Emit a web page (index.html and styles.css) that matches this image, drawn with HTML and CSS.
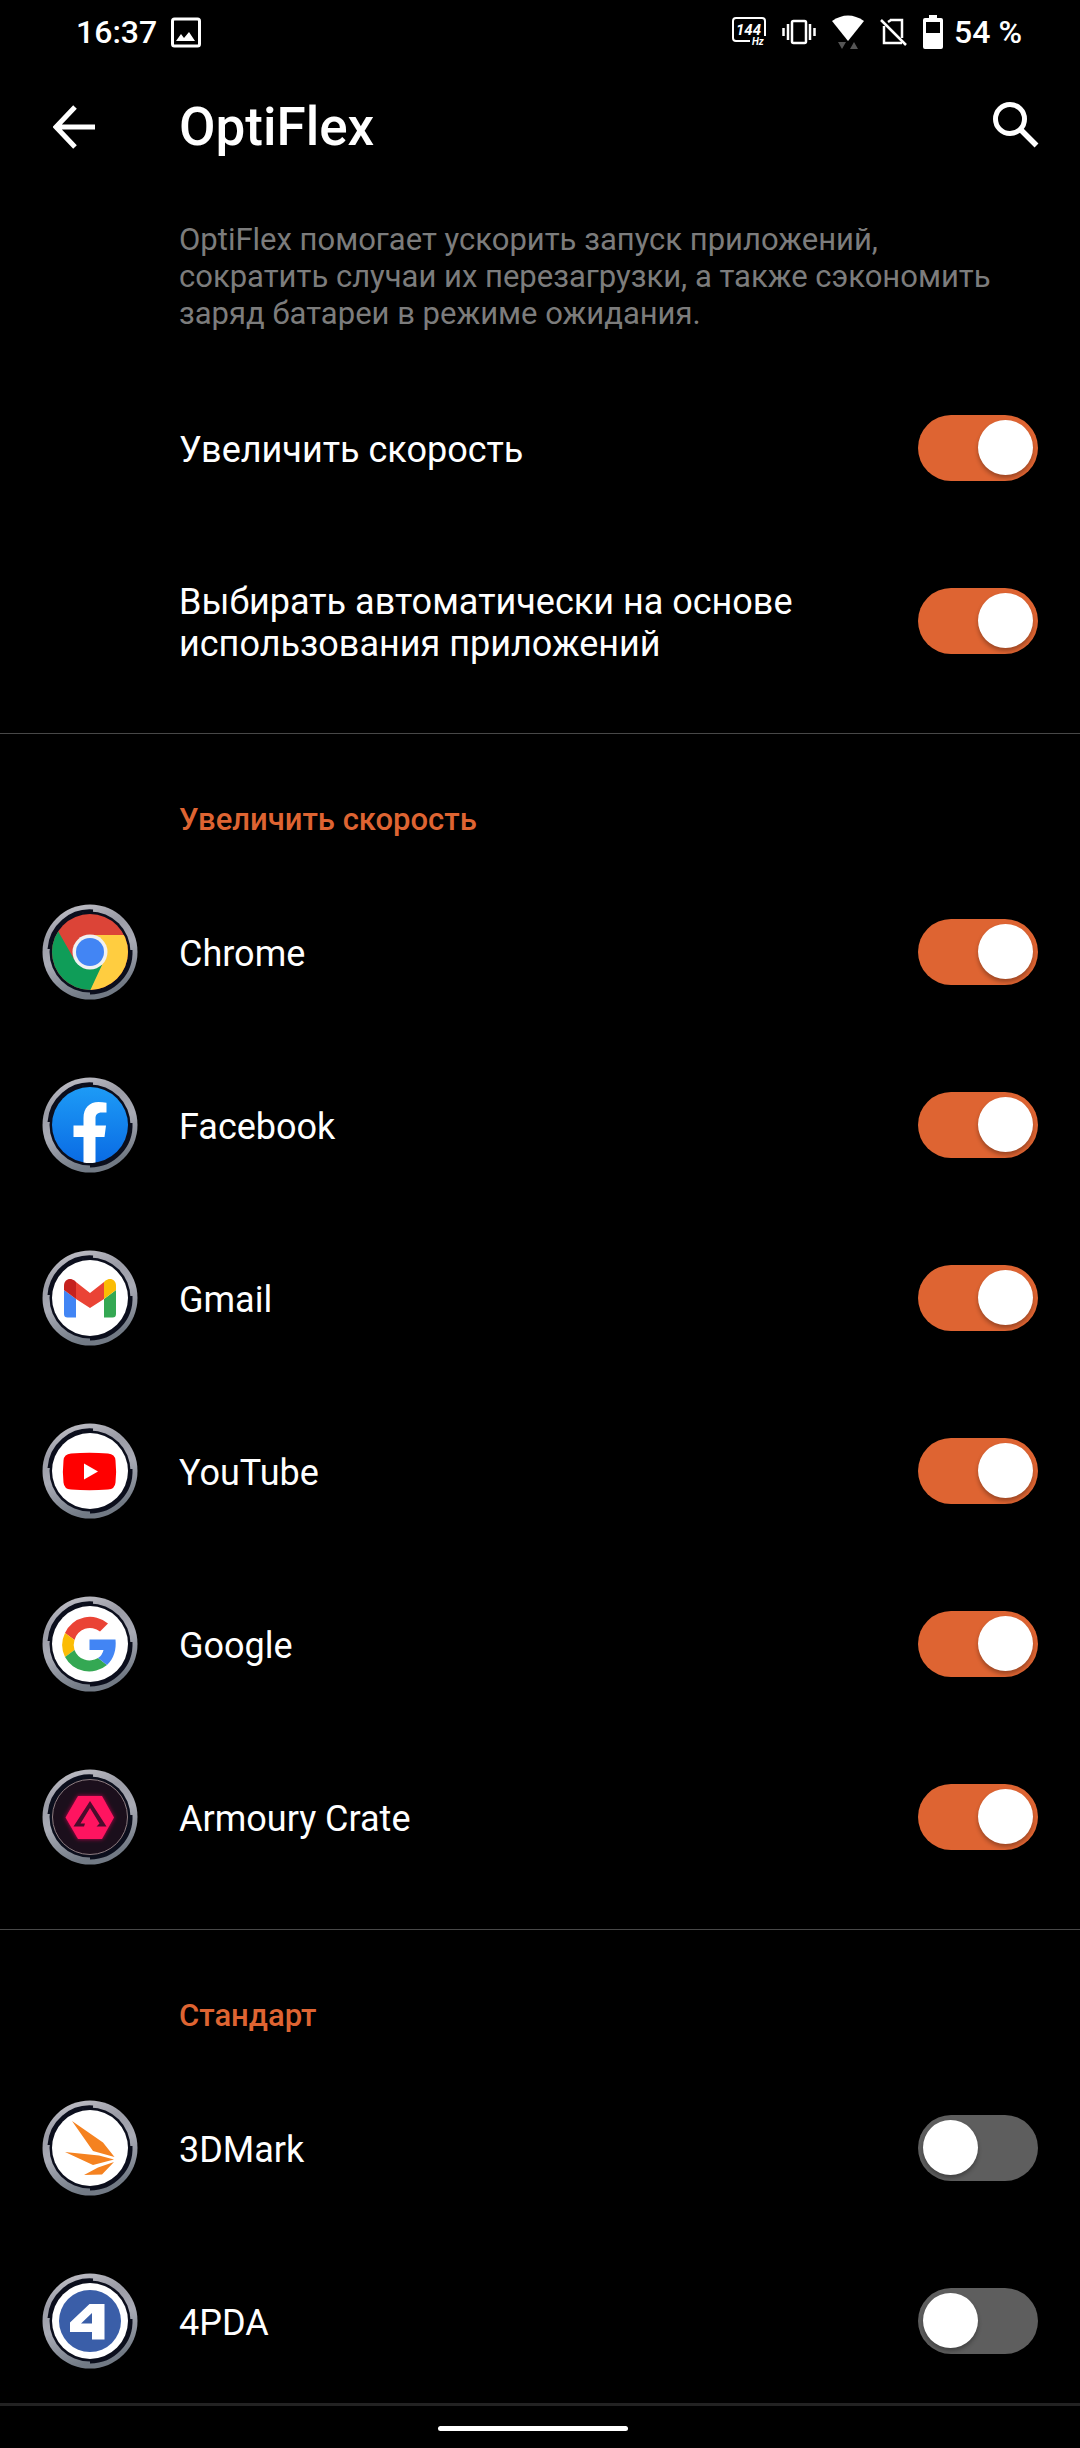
FILE: index.html
```html
<!DOCTYPE html>
<html lang="ru">
<head>
    <meta charset="UTF-8">
    <meta name="viewport" content="width=device-width, initial-scale=1.0">
    <title>OptiFlex</title>
    <link rel="stylesheet" href="styles.css">
</head>
<body>
    <!-- shared icon parts -->
    <svg class="defs" aria-hidden="true">
        <defs>
            <linearGradient id="metal" x1="0" y1="0" x2="0.3" y2="1">
                <stop offset="0" stop-color="#c9c8cf"/>
                <stop offset="0.35" stop-color="#9b9ca6"/>
                <stop offset="0.6" stop-color="#a9abb5"/>
                <stop offset="1" stop-color="#727a85"/>
            </linearGradient>
            <linearGradient id="fb" x1="0" y1="0" x2="0" y2="1">
                <stop offset="0" stop-color="#1d9bf6"/>
                <stop offset="1" stop-color="#0a6be4"/>
            </linearGradient>
            <clipPath id="disc"><circle cx="60" cy="62" r="38"/></clipPath>
            <filter id="glow" x="-30%" y="-30%" width="160%" height="160%"><feGaussianBlur stdDeviation="2"/></filter>
            <g id="ring">
                <circle cx="60" cy="62" r="47.500" fill="url(#metal)"/>
                <circle cx="60" cy="62" r="40.500" fill="#0b0e1c"/>
                <path d="M19 59A41 41 0 0 1 63 21" fill="none" stroke="#0b0e1c" stroke-width="3"/>
                <path d="M101 60A41 41 0 0 1 60 103" fill="none" stroke="#0b0e1c" stroke-width="3"/>
            </g>
        </defs>
    </svg>

    <div class="screen">
        <div class="status-bar">
            <span class="time">16:37</span>
            <svg class="photo-icon" width="30" height="31" viewBox="0 0 30 31">
                <rect x="1.500" y="2" width="27" height="27" rx="2" fill="none" stroke="#fff" stroke-width="3"/>
                <path d="M5 24l5-7 3 4 5-6 6 9z" fill="#fff"/>
            </svg>
            <div class="status-icons">
                <svg width="34" height="30" viewBox="0 0 34 30">
                    <path d="M18 24H4a3 3 0 0 1-3-3V4a3 3 0 0 1 3-3h26a3 3 0 0 1 3 3v15" fill="none" stroke="#fff" stroke-width="2"/>
                    <text class="hz-num" x="4" y="18">144</text>
                    <text class="hz-unit" x="20" y="28">Hz</text>
                </svg>
                <svg width="34" height="26" viewBox="0 0 34 26">
                    <rect x="10" y="2" width="14" height="22" rx="1.500" fill="none" stroke="#fff" stroke-width="2.500"/>
                    <path d="M6 5v16M28 5v16M1.500 9v8M32.500 9v8" stroke="#fff" stroke-width="2.500"/>
                </svg>
                <svg width="32" height="34" viewBox="0 0 32 34">
                    <path d="M0 6Q16-5 32 6L16 26z" fill="#fff"/>
                    <path d="M6 27h8l-4 7zM18 34h8l-4-7z" fill="#555"/>
                </svg>
                <svg width="27" height="29" viewBox="0 0 27 29">
                    <path d="M10 2h12v18M4 8v17h18M8 4l3-2" fill="none" stroke="#fff" stroke-width="2.500"/>
                    <path d="M1 2l25 25" stroke="#fff" stroke-width="2.500"/>
                </svg>
                <div class="battery">
                    <svg width="20" height="34" viewBox="0 0 20 34">
                        <path fill-rule="evenodd" d="M6 0h8v3h4a2 2 0 0 1 2 2v27a2 2 0 0 1-2 2H2a2 2 0 0 1-2-2V5a2 2 0 0 1 2-2h4zM3 7v11h14V7z" fill="#fff"/>
                    </svg>
                    <span>54 %</span>
                </div>
            </div>
        </div>

        <header class="toolbar">
            <button class="icon-button back" type="button" aria-label="Назад">
                <svg width="42" height="44" viewBox="0 0 42 44"><path d="M42 22H4M22 2L3 22l19 20" fill="none" stroke="#fff" stroke-width="5"/></svg>
            </button>
            <h1>OptiFlex</h1>
            <button class="icon-button" type="button" aria-label="Поиск">
                <svg width="46" height="50" viewBox="0 0 46 50"><circle cx="17" cy="17" r="14.500" fill="none" stroke="#fff" stroke-width="5"/><path d="M27 27l16.500 16.500" stroke="#fff" stroke-width="5.500"/></svg>
            </button>
        </header>

        <main class="content">
            <p class="intro">OptiFlex помогает ускорить запуск приложений, сократить случаи их перезагрузки, а также сэкономить заряд батареи в режиме ожидания.</p>

            <section class="group">
                <label class="row">
                    <span class="name">Увеличить скорость</span>
                    <input class="switch" type="checkbox" role="switch" checked>
                </label>
                <label class="row">
                    <span class="name">Выбирать автоматически на основе использования приложений</span>
                    <input class="switch" type="checkbox" role="switch" checked>
                </label>
            </section>

            <section class="group">
                <h2>Увеличить скорость</h2>
                <label class="row">
                    <svg class="app-icon" viewBox="0 2 120 120">
                        <use href="#ring"/>
                        <g clip-path="url(#disc)">
                            <path d="M20 20h80v80H20z" fill="#dc4437"/>
                            <path d="M60 45h50v60H58l14-34z" fill="#ffcd40"/>
                            <path d="M28 41l16 28 28 6-14 30H15V41z" fill="#0f9d58"/>
                        </g>
                        <circle cx="60" cy="62" r="17.500" fill="#f1f1f1"/>
                        <circle cx="60" cy="62" r="14" fill="#4285f4"/>
                    </svg>
                    <span class="name">Chrome</span>
                    <input class="switch" type="checkbox" role="switch" checked>
                </label>
                <label class="row">
                    <svg class="app-icon" viewBox="0 2 120 120">
                        <use href="#ring"/>
                        <circle cx="60" cy="62" r="38" fill="url(#fb)"/>
                        <path d="M53.500 99.500V74H43.500V62.500h10V55c0-10 6-16 15-16q4 0 8 .700v9.800h-4.500c-5 0-6.500 2.500-6.500 6v7h10.500L74.500 74h-9v25.500q-6 1-12 0z" fill="#fff"/>
                    </svg>
                    <span class="name">Facebook</span>
                    <input class="switch" type="checkbox" role="switch" checked>
                </label>
                <label class="row">
                    <svg class="app-icon" viewBox="0 2 120 120">
                        <use href="#ring"/>
                        <circle cx="60" cy="62" r="38" fill="#fff"/>
                        <path d="M34 54l12 9v18.500h-8.500a3.500 3.500 0 0 1-3.500-3.500z" fill="#4285f4"/>
                        <path d="M86 54l-12 9v18.500h8.500A3.500 3.500 0 0 0 86 78z" fill="#34a853"/>
                        <path d="M46 46l14 11 14-11v17L60 72 46 63z" fill="#ea4335"/>
                        <path d="M34 54v-4.500c0-6 6-8.500 10.500-5L46 46v17z" fill="#c5221f"/>
                        <path d="M86 54v-4.500c0-6-6-8.500-10.500-5L74 46v17z" fill="#fbbc04"/>
                    </svg>
                    <span class="name">Gmail</span>
                    <input class="switch" type="checkbox" role="switch" checked>
                </label>
                <label class="row">
                    <svg class="app-icon" viewBox="0 2 120 120">
                        <use href="#ring"/>
                        <circle cx="60" cy="62" r="38" fill="#fff"/>
                        <path d="M41 44.500q18.500-1.500 37 0 7 .5 7.500 7 1.200 11 0 22-.5 6.500-7.500 7-18.500 1.500-37 0-7-.5-7.500-7-1.200-11 0-22 .5-6.500 7.500-7z" fill="#f00"/>
                        <path d="M54 54.500v16L68 62.500z" fill="#fff"/>
                    </svg>
                    <span class="name">YouTube</span>
                    <input class="switch" type="checkbox" role="switch" checked>
                </label>
                <label class="row">
                    <svg class="app-icon" viewBox="0 2 120 120">
                        <use href="#ring"/>
                        <circle cx="60" cy="62" r="38" fill="#fff"/>
                        <path d="M35 51A27.500 27.500 0 0 1 78 41.500l-8 8A16 16 0 0 0 44.500 58z" fill="#ea4335"/>
                        <path d="M35 51a27.500 27.500 0 0 0 0 24l9.500-7a16 16 0 0 1 0-10z" fill="#fbbc05"/>
                        <path d="M35 75a27.500 27.500 0 0 0 42 8l-9-7a16 16 0 0 1-23.500-8z" fill="#34a853"/>
                        <path d="M59.500 57.500h26c1 10-1.500 19-8.500 25.500l-9-7q4.500-3 5.500-8h-14z" fill="#4285f4"/>
                    </svg>
                    <span class="name">Google</span>
                    <input class="switch" type="checkbox" role="switch" checked>
                </label>
                <label class="row">
                    <svg class="app-icon" viewBox="0 2 120 120">
                        <use href="#ring"/>
                        <circle cx="60" cy="62" r="37.500" fill="#1b0f1c" stroke="#8d7c80" stroke-width="1"/>
                        <path d="M48 41h24l12 21.500L72 84H48L35.500 62.500z" fill="#c4104f" filter="url(#glow)"/>
                        <path d="M48 41h24l12 21.500L72 84H48L35.500 62.500z" fill="#ff1460"/>
                        <path d="M60 46l16.500 25.500H66.500l3-3L60 53 50.500 68.500H55l-1 3H43.500z" fill="#4a0c2c"/>
                    </svg>
                    <span class="name">Armoury Crate</span>
                    <input class="switch" type="checkbox" role="switch" checked>
                </label>
            </section>

            <section class="group">
                <h2>Стандарт</h2>
                <label class="row">
                    <svg class="app-icon" viewBox="0 2 120 120">
                        <use href="#ring"/>
                        <circle cx="60" cy="62" r="38" fill="#fff"/>
                        <path d="M42 35l31 21.500L84.500 71 63 65zM35 66l34 3.500 15 4L63 79zM84 76L72 88.500l-18 .5 14-7.500z" fill="#f58220"/>
                    </svg>
                    <span class="name">3DMark</span>
                    <input class="switch" type="checkbox" role="switch">
                </label>
                <label class="row">
                    <svg class="app-icon" viewBox="0 2 120 120">
                        <use href="#ring"/>
                        <circle cx="60" cy="62" r="38" fill="#fff"/>
                        <circle cx="60" cy="62" r="31" fill="#3a5ea8"/>
                        <path fill-rule="evenodd" d="M59.500 45h15v35.500H62V73H40v-9.500zM62 54L51 64.500h11z" fill="#fff"/>
                    </svg>
                    <span class="name">4PDA</span>
                    <input class="switch" type="checkbox" role="switch">
                </label>
            </section>
        </main>

        <footer class="nav-bar"><span class="home-handle"></span></footer>
    </div>
</body>
</html>
```
FILE: styles.css
```css
* {
    box-sizing: border-box;
}
body {
    margin: 0;
    background-color: #000;
    color: #fff;
    font-family: Roboto, sans-serif;
}
.defs {
    position: absolute;
    width: 0;
    height: 0;
}
.screen {
    display: flex;
    flex-direction: column;
    height: 100vh;
}
.status-bar {
    display: flex;
    align-items: center;
    flex-shrink: 0;
    height: 64px;
    padding: 0 58px 0 76px;
    font-size: 32px;
    font-weight: 500;
}
.photo-icon {
    margin-left: 14px;
}
.status-icons {
    display: flex;
    align-items: center;
    gap: 16px;
    margin-left: auto;
}
.hz-num, .hz-unit {
    fill: #fff;
    font-style: italic;
    font-weight: 700;
}
.hz-num {
    font-size: 15px;
}
.hz-unit {
    font-size: 10px;
}
.battery {
    display: flex;
    align-items: center;
    gap: 11px;
}
.toolbar {
    display: flex;
    align-items: center;
    flex-shrink: 0;
    height: 126px;
    padding: 0 41px 0 53px;
}
.icon-button {
    display: flex;
    padding: 0;
    border: none;
    background: none;
    cursor: pointer;
}
.back {
    width: 126px;
}
h1 {
    flex: 1;
    margin: 0;
    font-size: 53px;
    font-weight: 500;
}
.content {
    flex: 1;
    overflow-y: auto;
    scrollbar-width: none;
}
.intro {
    margin: 0;
    padding: 31px 80px 29px 179px;
    color: #7c7c7c;
    font-size: 31px;
    line-height: 37px;
}
.group {
    padding-bottom: 26px;
}
.group + .group {
    border-top: 1px solid #484848;
}
h2 {
    margin: 0;
    padding: 68px 42px 27px 179px;
    color: #de6432;
    font-size: 31px;
    font-weight: 500;
    line-height: 36px;
}
.row {
    display: grid;
    grid-template-columns: 149px 1fr 120px;
    align-items: center;
    height: 173px;
    padding: 0 42px 0 30px;
    cursor: pointer;
}
.app-icon {
    width: 120px;
    height: 120px;
}
.name {
    grid-column: 2;
    padding: 5px 60px 0 0;
    font-size: 36px;
    line-height: 42px;
}
.switch {
    appearance: none;
    width: 120px;
    height: 66px;
    margin: 0;
    padding: 5px;
    border-radius: 33px;
    background-color: #5e5e5e;
    cursor: pointer;
}
.switch::before {
    content: "";
    display: block;
    width: 55px;
    height: 55px;
    border-radius: 50%;
    background-color: #fff;
    box-shadow: 0 3px 4px rgba(0,0,0,0.3);
}
.switch:checked {
    background-color: #de6432;
}
.switch:checked::before {
    margin-left: auto;
}
.nav-bar {
    display: flex;
    justify-content: center;
    flex-shrink: 0;
    height: 45px;
    padding: 20px 14px 0 0;
    border-top: 3px solid #222;
}
.home-handle {
    width: 190px;
    height: 5px;
    border-radius: 3px;
    background-color: #fff;
}
```
